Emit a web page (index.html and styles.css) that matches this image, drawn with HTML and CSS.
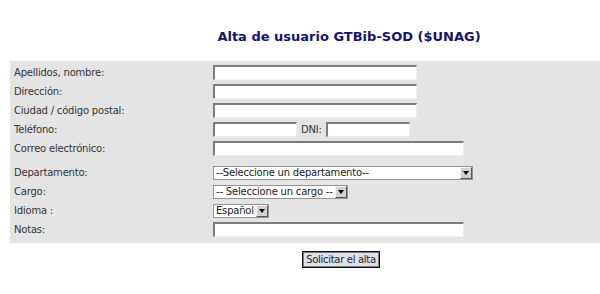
FILE: index.html
```html
<!DOCTYPE html>
<html lang="es">
  <head>
    <meta charset="UTF-8" />
    <meta name="viewport" content="width=device-width, initial-scale=1.0" />
    <title>Alta de usuario GTBib-SOD</title>
    <link rel="stylesheet" href="styles.css">
  </head>
  <body>
    <div class="page">
      <h1 class="title">Alta de usuario GTBib-SOD ($UNAG)</h1>

      <form class="signup" action="#">
        <div class="fields">
          <div class="row">
            <label for="nombre">Apellidos, nombre:</label>
            <input type="text" id="nombre" class="w-mid" />
          </div>
          <div class="row">
            <label for="direccion">Dirección:</label>
            <input type="text" id="direccion" class="w-mid" />
          </div>
          <div class="row">
            <label for="ciudad">Ciudad / código postal:</label>
            <input type="text" id="ciudad" class="w-mid" />
          </div>
          <div class="row">
            <label for="telefono">Teléfono:</label>
            <span class="pair">
              <input type="text" id="telefono" class="w-short" />
              <label for="dni" class="inline-label">DNI:</label>
              <input type="text" id="dni" class="w-short" />
            </span>
          </div>
          <div class="row row-spaced">
            <label for="correo">Correo electrónico:</label>
            <input type="text" id="correo" class="w-long" />
          </div>
          <div class="row">
            <label for="departamento">Departamento:</label>
            <span class="select w-dept">
              <select id="departamento">
                <option>--Seleccione un departamento--</option>
              </select>
            </span>
          </div>
          <div class="row">
            <label for="cargo">Cargo:</label>
            <span class="select w-cargo">
              <select id="cargo">
                <option>-- Seleccione un cargo --</option>
              </select>
            </span>
          </div>
          <div class="row">
            <label for="idioma">Idioma :</label>
            <span class="select w-lang">
              <select id="idioma">
                <option>Español</option>
              </select>
            </span>
          </div>
          <div class="row">
            <label for="notas">Notas:</label>
            <input type="text" id="notas" class="w-long" />
          </div>
        </div>

        <div class="actions">
          <button type="submit">Solicitar el alta</button>
        </div>
      </form>
    </div>
  </body>
</html>
```

FILE: styles.css
```css
body {
  margin: 0;
  background: #fff;
  color: #333;
  font-family: "DejaVu Sans", Verdana, sans-serif;
  font-size: 10px;
  letter-spacing: -0.2px;
}

.page {
  margin-left: 10px;
}

.title {
  margin: 0;
  padding: 29px 0 0 88px;
  font-size: 13px;
  font-weight: bold;
  line-height: 16px;
  letter-spacing: 0;
  text-align: center;
  color: #14146b;
}

.signup {
  margin-top: 16px;
}

.fields {
  background: #e4e4e4;
  padding: 2px 0 4px;
}

.row {
  display: flex;
  align-items: center;
  height: 19px;
}

.row-spaced {
  margin-bottom: 5px;
}

.row > label {
  width: 203px;
  padding-left: 4px;
  box-sizing: border-box;
  flex-shrink: 0;
}

.pair {
  display: flex;
  align-items: center;
}

.inline-label {
  padding: 0 4px 0 4px;
}

input[type="text"] {
  box-sizing: border-box;
  height: 15px;
  margin: 0;
  padding: 0 2px;
  background: #fff;
  border-style: solid;
  border-width: 2px 1px 1px 2px;
  border-color: #7c7c7c #eeeeee #eeeeee #7c7c7c;
  font: inherit;
}

.w-mid { width: 204px; }
.w-long { width: 251px; }
.w-short { width: 84px; }

/* select with the old grey arrow box drawn over it */
.select {
  position: relative;
  display: inline-block;
  height: 14px;
}

.select select {
  appearance: none;
  -webkit-appearance: none;
  box-sizing: border-box;
  width: 100%;
  height: 14px;
  margin: 0;
  padding: 0 0 0 2px;
  background: #fff;
  border: 1px solid #959595;
  border-radius: 0;
  font: inherit;
  letter-spacing: inherit;
  line-height: 12px;
  color: #222;
}

.select::after {
  content: "";
  position: absolute;
  top: 1px;
  right: 1px;
  bottom: 1px;
  width: 12px;
  background: #d4d2cc;
  border-style: solid;
  border-width: 1px;
  border-color: #f4f4f4 #555 #555 #f4f4f4;
  box-sizing: border-box;
  pointer-events: none;
}

.select::before {
  content: "";
  position: absolute;
  z-index: 1;
  top: 5px;
  right: 4px;
  border-left: 3px solid transparent;
  border-right: 3px solid transparent;
  border-top: 4px solid #000;
  pointer-events: none;
}

.w-dept { width: 260px; }
.w-cargo { width: 135px; }
.w-lang { width: 56px; }

.actions {
  padding: 8px 0 0 72px;
  text-align: center;
}

.actions button {
  height: 17px;
  margin: 0;
  padding: 0 3px;
  background: #dfe1ea;
  border: 1px solid #111;
  box-shadow: inset 0 0 0 1px #7a7a7a;
  border-radius: 0;
  font: inherit;
  letter-spacing: -0.3px;
  color: #222;
}
```
